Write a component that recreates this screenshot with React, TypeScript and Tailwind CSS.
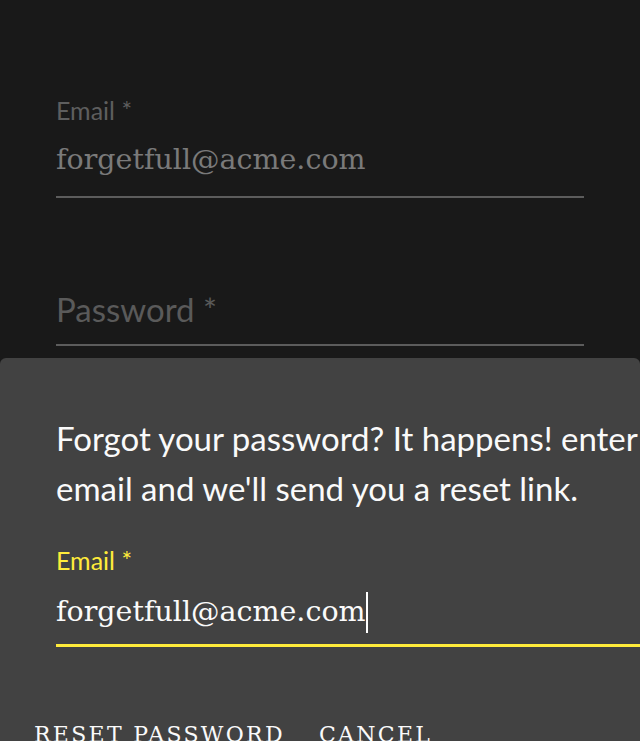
import React from 'react';

const sans = { fontFamily: 'Lato, "Noto Sans", sans-serif' };
const slab = { fontFamily: '"DejaVu Serif", "Liberation Serif", serif' };

const App: React.FC = () => {
  return (
    <div className="relative h-[741px] w-[640px] overflow-hidden bg-[#191919]">
      {/* sign-in form behind the sheet */}
      <div className="w-[640px] pl-14 pt-[95px]">
        <label className="block h-[30px] text-[25px] leading-[30px] text-[#5e5e5e]" style={sans}>
          Email *
        </label>
        <div className="mt-[15px] h-[40px] text-[28.5px] leading-[40px] text-[#7a7a7a]" style={slab}>
          forgetfull@acme.com
        </div>
        <div className="mt-[16px] h-[2px] w-[528px] bg-[#5c5c5c]" />
        <div className="mt-[91px] h-[40px] text-[33px] leading-[40px] text-[#5a5a5a]" style={sans}>
          Password *
        </div>
        <div className="mt-[15px] h-[2px] w-[528px] bg-[#5c5c5c]" />
      </div>

      {/* reset password sheet */}
      <div className="absolute left-0 top-[358px] h-[420px] w-[640px] overflow-hidden rounded-t-[6px] bg-[#424242]">
        <div className="w-[780px] pt-[55px]">
          <p
            className="whitespace-nowrap pl-14 text-[33px] leading-[50px] text-[#fafafa]"
            style={sans}
          >
            Forgot your password? It happens! enter your
            <br />
            email and we'll send you a reset link.
          </p>
          <label
            className="mt-[32px] block h-[30px] pl-14 text-[25px] leading-[30px] text-[#ffeb3b]"
            style={sans}
          >
            Email *
          </label>
          <div className="mt-[17px] flex h-[41px] items-start pl-14">
            <span className="text-[28.5px] leading-[40px] text-[#fafafa]" style={slab}>
              forgetfull@acme.com
            </span>
            <div className="h-[41px] w-[2px] bg-white" />
          </div>
          <div className="ml-14 mt-[11px] h-[3px] w-[700px] bg-[#ffeb3b]" />
          <div className="ml-[34px] mt-[76px] flex items-start gap-[34px]">
            <button
              className="text-[22px] uppercase leading-[24px] tracking-[2.3px] text-[#fafafa]"
              style={slab}
            >
              Reset Password
            </button>
            <button
              className="text-[22px] uppercase leading-[24px] tracking-[2.3px] text-[#fafafa]"
              style={slab}
            >
              Cancel
            </button>
          </div>
        </div>
      </div>
    </div>
  );
};

export default App;
